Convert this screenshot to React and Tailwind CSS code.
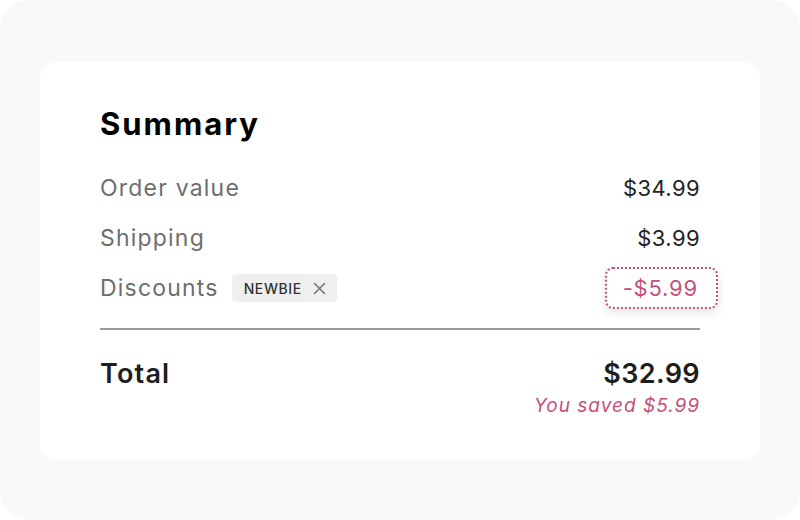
import React from "react";

export default function App() {
  const font = { fontFamily: "Inter, 'Noto Sans', sans-serif" };
  return (
    <div className="w-[800px] h-[520px] bg-white" style={font}>
      <div className="w-[800px] h-[520px] bg-[#f9f9f9] rounded-[28px] pl-[40px] pt-[62px]">
        <div className="w-[720px] h-[398px] bg-white rounded-[16px] px-[60px] pt-[42px]">
          <h1 className="text-[31px] leading-[40px] font-bold text-black tracking-[2px]">Summary</h1>
          <div className="mt-[19px] flex flex-col">
            <div className="h-[50px] flex items-center justify-between">
              <span className="text-[23px] tracking-[1.2px] text-[#6e6e6e]">Order value</span>
              <span className="text-[22px] tracking-[0.4px] text-[#222]">$34.99</span>
            </div>
            <div className="h-[50px] flex items-center justify-between">
              <span className="text-[23px] tracking-[1.2px] text-[#6e6e6e]">Shipping</span>
              <span className="text-[22px] tracking-[0.4px] text-[#222]">$3.99</span>
            </div>
            <div className="h-[50px] flex items-center justify-between">
              <div className="flex items-center gap-[13px]">
                <span className="text-[23px] tracking-[1.2px] text-[#6e6e6e]">Discounts</span>
                <span className="h-[28px] bg-[#efefef] rounded-[4px] pl-[12px] pr-[11px] flex items-center gap-[11px] text-[14px] tracking-[0.6px] font-medium text-[#333]">
                  NEWBIE
                  <svg width="13" height="13" viewBox="0 0 13 13" fill="none" stroke="#777" strokeWidth="1.6" strokeLinecap="round">
                    <path d="M1.5 1.5 L11.5 11.5 M11.5 1.5 L1.5 11.5" />
                  </svg>
                </span>
              </div>
              <span className="mr-[-18px] h-[42px] pl-[16px] pr-[18px] flex items-center rounded-[8px] border-2 border-dotted border-[#c4517d] text-[22px] tracking-[0.8px] text-[#c4517d] shadow-[0_3px_8px_rgba(0,0,0,0.12)]">
                -$5.99
              </span>
            </div>
          </div>
          <div className="mt-[15px] h-[2px] bg-[#9a9a9a]" />
          <div className="mt-[24px] flex items-start justify-between">
            <span className="text-[27px] leading-[40px] font-semibold tracking-[1.2px] text-[#1e1e1e]">Total</span>
            <div className="flex flex-col items-end">
              <span className="text-[27px] leading-[40px] font-semibold tracking-[0.4px] text-[#1e1e1e]">$32.99</span>
              <span className="text-[19px] leading-[24px] italic tracking-[1px] text-[#c4517d]">You saved $5.99</span>
            </div>
          </div>
        </div>
      </div>
    </div>
  );
}
